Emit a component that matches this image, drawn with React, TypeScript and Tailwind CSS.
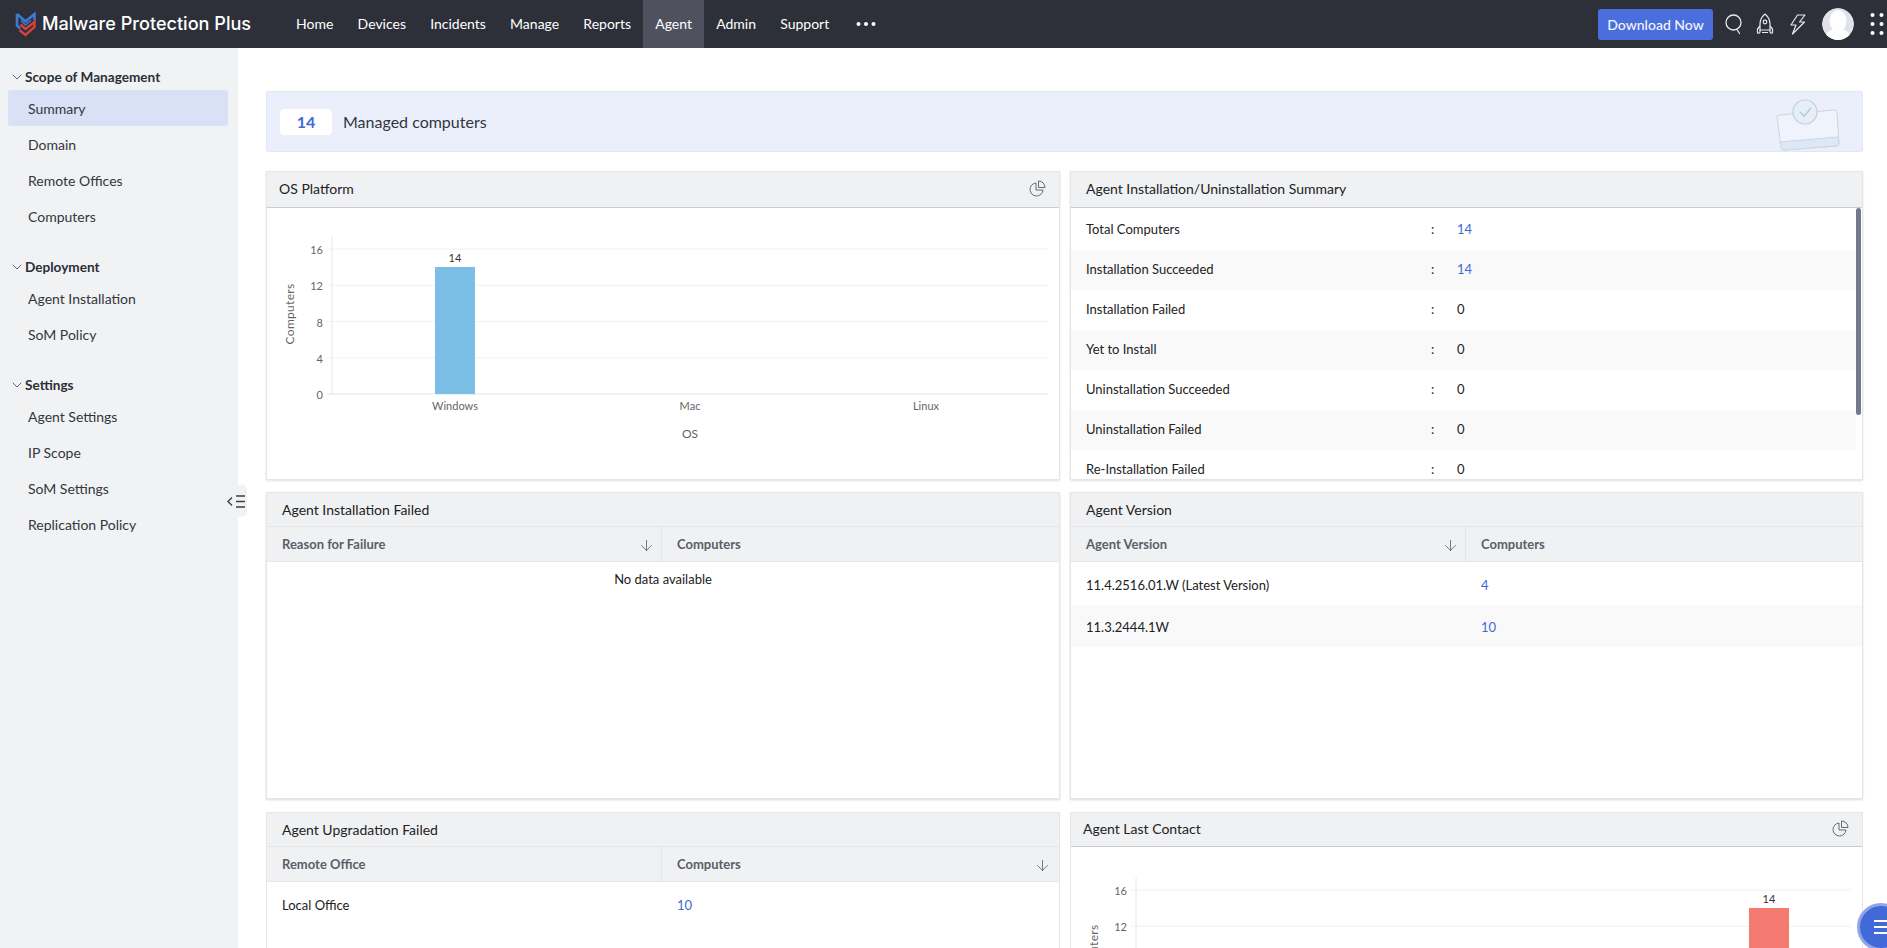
import { ChevronDown, ArrowDown } from "lucide-react";

const navItems = ["Home", "Devices", "Incidents", "Manage", "Reports", "Agent", "Admin", "Support"];

const sideGroups = [
  { title: "Scope of Management", items: ["Summary", "Domain", "Remote Offices", "Computers"] },
  { title: "Deployment", items: ["Agent Installation", "SoM Policy"] },
  { title: "Settings", items: ["Agent Settings", "IP Scope", "SoM Settings", "Replication Policy"] },
];

const summaryRows: [string, string, boolean][] = [
  ["Total Computers", "14", true],
  ["Installation Succeeded", "14", true],
  ["Installation Failed", "0", false],
  ["Yet to Install", "0", false],
  ["Uninstallation Succeeded", "0", false],
  ["Uninstallation Failed", "0", false],
  ["Re-Installation Failed", "0", false],
];

function Logo() {
  return (
    <svg width="22" height="25" viewBox="0 0 22 25" fill="none" className="shrink-0">
      <path d="M2 2 V13.5 L5 16.5 M2 2 L10.5 9.5 L19.5 2 V8.5" stroke="#3f78cf" strokeWidth="2.6" strokeLinejoin="miter" />
      <path d="M6 8.5 L10.5 13 L16 8.5" stroke="#3f78cf" strokeWidth="1.6" />
      <path d="M5.5 12.5 L10.5 17 L19.5 10 V15 L10.5 23 L4.5 18" stroke="#d8403f" strokeWidth="2.4" strokeLinejoin="miter" />
    </svg>
  );
}

function SearchIcon() {
  return (
    <svg width="20" height="22" viewBox="0 0 20 22" fill="none" stroke="#e8e9ec" strokeWidth="1.3">
      <circle cx="9.5" cy="9.5" r="7.5" />
      <path d="M13 16.5 L15.5 20.5" strokeLinecap="round" />
    </svg>
  );
}

function RocketIcon() {
  return (
    <svg width="18" height="22" viewBox="0 0 18 22" fill="none" stroke="#e8e9ec" strokeWidth="1.2" strokeLinejoin="round">
      <path d="M9 1 C5.5 4 4 7.5 4 11 L4 17 L14 17 L14 11 C14 7.5 12.5 4 9 1 Z" />
      <circle cx="9" cy="9" r="1.8" />
      <path d="M4 13 L1.5 16 L1.5 19.5 C1.5 20.5 4 20.5 4 19 L4 17 M14 13 L16.5 16 L16.5 19.5 C16.5 20.5 14 20.5 14 19 L14 17 M6 19.5 L12 19.5" />
    </svg>
  );
}

function BoltIcon() {
  return (
    <svg width="16" height="21" viewBox="0 0 16 21" fill="none" stroke="#e8e9ec" strokeWidth="1.2" strokeLinejoin="round">
      <path d="M7.5 1 L15 1 L9.5 8 L14.5 8 L2.5 20 L6 11 L1 11 Z" />
    </svg>
  );
}

function Avatar() {
  return (
    <svg width="32" height="32" viewBox="0 0 32 32" className="rounded-full shrink-0">
      <circle cx="16" cy="16" r="16" fill="#dfe2ea" />
      <ellipse cx="16" cy="13" rx="8.5" ry="11" fill="#ffffff" />
      <path d="M3 32 C3 24 9 21 16 21 C23 21 29 24 29 32 Z" fill="#ffffff" />
    </svg>
  );
}

function AppsGrid() {
  return (
    <svg width="22" height="24" viewBox="0 0 22 24" fill="#ffffff">
      {[3, 12, 21].map((cy) =>
        [2.5, 11.5, 20.5].map((cx) => <circle key={`${cx}-${cy}`} cx={cx} cy={cy} r="2" />),
      )}
    </svg>
  );
}

function PieIcon() {
  return (
    <svg width="17" height="17" viewBox="0 0 17 17" fill="none" stroke="#666b73" strokeWidth="1">
      <path d="M7 3 A6.5 6.5 0 1 0 14 10 L7 10 Z" />
      <path d="M9.5 1 A6.5 6.5 0 0 1 16 7.5 L9.5 7.5 Z" />
    </svg>
  );
}

function Illustration() {
  return (
    <svg width="64" height="54" viewBox="0 0 64 54" fill="none" className="shrink-0">
      <path d="M3 16 L58 11 Q61 11 61 14 L63 44 Q63 47 60 47 L8 51 Q5 51 5 48 L1 18 Q1 16 3 16 Z" fill="#eef3fc" stroke="#cfd5e0" strokeWidth="1" />
      <path d="M4 43 L62 38 L63 44 Q63 47 60 47 L8 51 Q5 51 5 48 Z" fill="#dce8f8" stroke="#cfd5e0" strokeWidth="1" />
      <circle cx="29" cy="13" r="12" fill="#e4eff8" stroke="#c9d0db" strokeWidth="1.2" />
      <path d="M24 13 L28 17 L35 9" stroke="#b9cbd9" strokeWidth="1.6" />
    </svg>
  );
}

function BarChart({
  barX,
  barColor,
  width,
  height,
  axisRight,
  labels,
}: {
  barX: number;
  barColor: string;
  width: number;
  height: number;
  axisRight: number;
  labels?: [string, number][];
}) {
  const ticks = [16, 12, 8, 4, 0];
  const base = 186;
  const xAxis = 65;
  return (
    <svg width={width} height={height} className="block font-[Lato,sans-serif]">
      <line x1={xAxis} y1={29} x2={xAxis} y2={base} stroke="#e6e6e6" />
      {ticks.map((t, i) => (
        <g key={t}>
          <line x1={xAxis - 5} y1={41 + i * 36.25} x2={axisRight} y2={41 + i * 36.25} stroke={t === 0 ? "#e0e3e8" : "#f1f1f1"} />
          <text x={xAxis - 9} y={46 + i * 36.25} textAnchor="end" fontSize="11" fill="#666666">
            {t}
          </text>
        </g>
      ))}
      <rect x={barX} y={59} width={40} height={base - 59} fill={barColor} />
      <text x={barX + 20} y={54} textAnchor="middle" fontSize="11" fill="#333333">
        14
      </text>
      <text
        transform={`rotate(-90 23 106)`}
        x={23}
        y={110}
        textAnchor="middle"
        fontSize="12"
        letterSpacing="0.3"
        fill="#666666"
      >
        Computers
      </text>
      {labels?.map(([l, x]) => (
        <text key={l} x={x} y={202} textAnchor="middle" fontSize="11" fill="#666666">
          {l}
        </text>
      ))}
      {labels && (
        <text x={423} y={230} textAnchor="middle" fontSize="12" fill="#666666">
          OS
        </text>
      )}
    </svg>
  );
}

function CardHeader({
  title,
  pie,
  px = "pl-[12px]",
  h = "h-[36px]",
}: {
  title: string;
  pie?: boolean;
  px?: string;
  h?: string;
}) {
  return (
    <div className={`flex shrink-0 items-center justify-between border-b border-[#c9ccd3] bg-[#f0f1f3] pb-[2px] pr-[13px] ${px} ${h}`}>
      <span className="text-[14px] text-[#222222]">{title}</span>
      {pie && <PieIcon />}
    </div>
  );
}

function TableHead({ left, right, sortRight }: { left: string; right: string; sortRight?: boolean }) {
  return (
    <div className="flex h-[35px] shrink-0 items-center border-b border-[#e4e6ea] bg-[#f0f1f3] text-[13px] font-bold text-[#5a5e66]">
      <div className="flex h-full w-[395px] items-center justify-between border-r border-[#e4e6ea] pl-[15px] pr-[6px] pt-[2px]">
        <span>{left}</span>
        {!sortRight && <ArrowDown size={17} strokeWidth={1} color="#444444" />}
      </div>
      <div className="flex h-full flex-1 items-center justify-between pl-[15px] pr-[8px] pt-[2px]">
        <span>{right}</span>
        {sortRight && <ArrowDown size={17} strokeWidth={1} color="#444444" />}
      </div>
    </div>
  );
}

function TableCardHeader({ title }: { title: string }) {
  return (
    <div className="flex h-[34px] shrink-0 items-center border-b border-[#e4e6ea] bg-[#f0f1f3] pl-[15px] text-[14px] text-[#222222]">
      {title}
    </div>
  );
}

export default function App() {
  return (
    <div className="flex h-screen flex-col overflow-hidden bg-white font-[Lato,sans-serif] text-[13px] text-[#222222]">
      <header className="flex h-[48px] shrink-0 items-center bg-[#2d3039] pl-[15px] text-white">
        <Logo />
        <span className="ml-[5px] w-[210px] whitespace-nowrap font-[Inter,sans-serif] text-[18.1px] font-medium">
          Malware Protection Plus
        </span>
        <nav className="ml-[32px] flex h-full items-center">
          {navItems.map((n) => (
            <a
              key={n}
              className={`flex h-full items-center px-[12.1px] pb-[1px] text-[14px] ${n === "Agent" ? "bg-[#4f525e]" : ""}`}
            >
              {n}
            </a>
          ))}
          <svg width="20" height="6" viewBox="0 0 20 6" fill="#ffffff" className="ml-[15px]">
            <circle cx="2.5" cy="3" r="2" />
            <circle cx="10" cy="3" r="2" />
            <circle cx="17.5" cy="3" r="2" />
          </svg>
        </nav>
        <div className="ml-auto flex h-full items-center">
          <button className="h-[31px] w-[115px] rounded-[3px] bg-[#4a6edb] text-[14px] font-medium text-[#f3f5fc]">
            Download Now
          </button>
          <div className="ml-[11px] flex w-[20px] justify-center"><SearchIcon /></div>
          <div className="ml-[11px] flex w-[20px] justify-center"><RocketIcon /></div>
          <div className="ml-[13px] flex w-[20px] justify-center"><BoltIcon /></div>
          <div className="ml-[14px]"><Avatar /></div>
          <div className="ml-[16px] w-[17px] overflow-hidden"><AppsGrid /></div>
        </div>
      </header>

      <div className="relative flex min-h-0 flex-1">
        <aside className="w-[238px] shrink-0 bg-[#f1f2f4] pl-[8px] pr-[10px] pt-[13px]">
          {sideGroups.map((g) => (
            <div key={g.title} className="mb-[17px]">
              <div className="flex h-[29px] items-center pl-[1px] pt-[3px] text-[13.6px] font-bold text-[#2c2f36]">
                <ChevronDown size={16} strokeWidth={1.2} color="#444444" />
                <span>{g.title}</span>
              </div>
              {g.items.map((it) => (
                <div
                  key={it}
                  className={`flex h-[36px] items-center rounded-[3px] pl-[20px] text-[14px] text-[#33363d] ${it === "Summary" ? "bg-[#d9e1f6]" : ""}`}
                >
                  {it}
                </div>
              ))}
            </div>
          ))}
        </aside>

        <div className="absolute left-[225px] top-[437px] flex h-[32px] w-[22px] items-center justify-center rounded-r-[5px] bg-[#f1f2f4]">
          <svg width="19" height="13" viewBox="0 0 19 13" fill="none" stroke="#3b3e46" strokeWidth="1.4">
            <path d="M5 2.5 L1 6.5 L5 10.5" />
            <path d="M9 1 H18 M9 6.5 H18 M9 12 H18" />
          </svg>
        </div>

        <main className="min-w-0 flex-1 overflow-hidden pl-[28px] pr-[24px] pt-[43px]">
          <section className="flex h-[61px] items-center rounded-[2px] border border-[#e3e7f0] bg-[#eaeffb] pl-[12px] pr-[22px]">
            <span className="flex h-[28px] w-[54px] items-center justify-center rounded-[5px] border border-[#eef0f5] bg-white text-[16px] font-bold text-[#4169d8]">
              14
            </span>
            <span className="ml-[10px] text-[16px] text-[#33363d]">Managed computers</span>
            <div className="-mb-[1px] ml-auto h-[53px] self-end overflow-hidden"><Illustration /></div>
          </section>

          <div className="mt-[19px] grid grid-cols-[794px_793px] gap-x-[10px]">
            <section className="flex h-[309px] flex-col border border-[#e4e6ea] shadow-[0_1px_2px_rgba(0,0,0,0.12)]">
              <CardHeader title="OS Platform" pie />
              <BarChart
                width={792}
                height={270}
                barX={168}
                barColor="#7cbfe6"
                axisRight={781}
                labels={[["Windows", 188], ["Mac", 423], ["Linux", 659]]}
              />
            </section>

            <section className="flex h-[309px] flex-col overflow-hidden border border-[#e4e6ea] shadow-[0_1px_2px_rgba(0,0,0,0.12)]">
              <CardHeader title="Agent Installation/Uninstallation Summary" px="pl-[15px]" />
              <div className="relative min-h-0 flex-1 overflow-hidden">
                <div className="mr-[6px] pt-[2px]">
                  {summaryRows.map(([label, val, link], i) => (
                    <div key={label} className={`flex h-[40px] items-center pl-[15px] text-[13px] ${i % 2 ? "bg-[#f9f9fa]" : ""}`}>
                      <span className="w-[345px]">{label}</span>
                      <span className="w-[26px]">:</span>
                      <span className={link ? "text-[#4169d8]" : ""}>{val}</span>
                    </div>
                  ))}
                </div>
                <div className="absolute right-[1px] top-0 h-[207px] w-[5px] rounded-[3px] bg-[#747a8c]" />
              </div>
            </section>

            <section className="mt-[12px] flex h-[307px] flex-col border border-[#e4e6ea] shadow-[0_1px_2px_rgba(0,0,0,0.15)]">
              <TableCardHeader title="Agent Installation Failed" />
              <TableHead left="Reason for Failure" right="Computers" />
              <div className="pt-[8px] text-center text-[13px]">No data available</div>
            </section>

            <section className="mt-[12px] flex h-[307px] flex-col border border-[#e4e6ea] shadow-[0_1px_2px_rgba(0,0,0,0.15)]">
              <TableCardHeader title="Agent Version" />
              <TableHead left="Agent Version" right="Computers" />
              <div className="flex h-[43px] items-center pt-[4px]">
                <span className="w-[395px] pl-[15px]">11.4.2516.01.W (Latest Version)</span>
                <span className="pl-[15px] text-[#4169d8]">4</span>
              </div>
              <div className="flex h-[42px] items-center bg-[#f9f9fa] pt-[3px]">
                <span className="w-[395px] pl-[15px]">11.3.2444.1W</span>
                <span className="pl-[15px] text-[#4169d8]">10</span>
              </div>
            </section>

            <section className="mt-[13px] flex h-[307px] flex-col border border-[#e4e6ea]">
              <TableCardHeader title="Agent Upgradation Failed" />
              <TableHead left="Remote Office" right="Computers" sortRight />
              <div className="flex h-[45px] items-center pt-[2px]">
                <span className="w-[395px] pl-[15px]">Local Office</span>
                <span className="pl-[15px] text-[#4169d8]">10</span>
              </div>
            </section>

            <section className="mt-[13px] flex h-[307px] flex-col border border-[#e4e6ea]">
              <CardHeader title="Agent Last Contact" pie h="h-[34px]" />
              <div className="mt-[2px]">
                <BarChart width={791} height={268} barX={678} barColor="#f47a72" axisRight={780} />
              </div>
            </section>
          </div>
        </main>

        <div className="absolute left-[1857px] top-[855px] flex h-[48px] w-[48px] items-center justify-start rounded-full border-[3px] border-[#8ea6e6] bg-[#4169d8] pl-[14px]">
          <svg width="16" height="14" viewBox="0 0 16 14" stroke="#ffffff" strokeWidth="2">
            <path d="M0 1 H16 M0 7 H16 M0 13 H16" />
          </svg>
        </div>
      </div>
    </div>
  );
}
